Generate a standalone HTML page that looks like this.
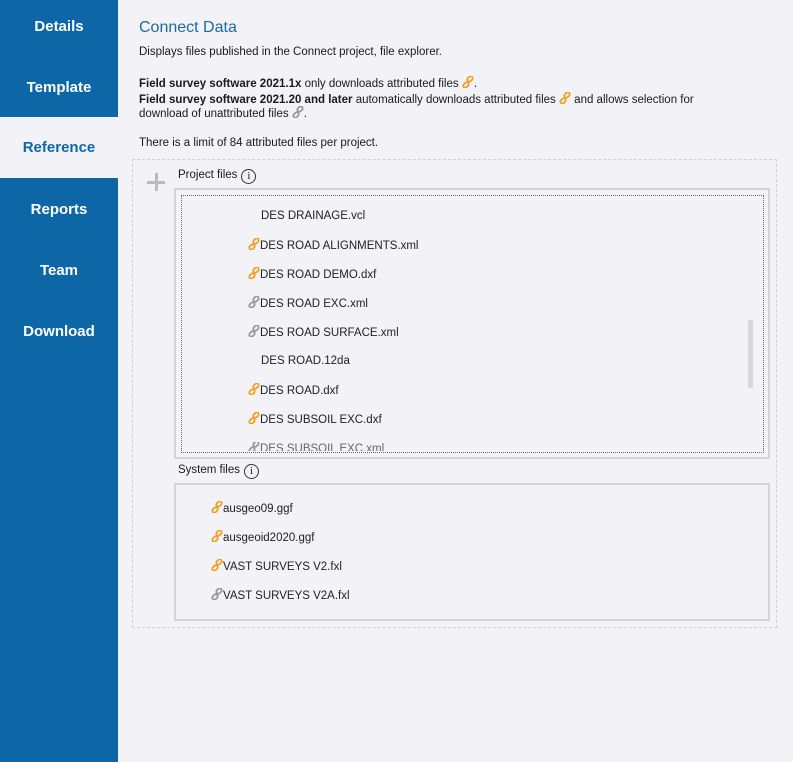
<!DOCTYPE html>
<html><head><meta charset="utf-8"><style>
*{margin:0;padding:0;box-sizing:border-box}
body{width:793px;height:762px;background:#f2f2f7;font-family:"Liberation Sans",sans-serif;color:#222;position:relative;overflow:hidden;font-size:11.5px}
.side{position:absolute;left:0;top:0;width:118px;height:762px;background:#0d67a7}
.tab{position:absolute;left:0;width:118px;height:61px;line-height:54px;text-align:center;color:#fff;font-weight:bold;font-size:15px}
.tab.act{background:#f2f2f7;color:#0d67a7}
.ab{position:absolute;white-space:nowrap}
.t{font-size:11.5px;color:#1a1a1a}
.dash{position:absolute;left:132px;top:159px;width:645px;height:469px;border:1px dashed #d0d0d6}
.box{position:absolute;border:2px solid #d3d3d8}
.dot{position:absolute;left:181px;top:195px;width:583px;height:258px;border:1px dotted #666;overflow:hidden}
.row{position:absolute;font-size:11.5px;color:#222;white-space:nowrap;line-height:14px}
svg.l{width:12px;height:12px;vertical-align:-1px}
.info{display:inline-block;width:15px;height:15px;border:1.3px solid #333;border-radius:50%;text-align:center;font-size:11px;line-height:13px;font-family:"Liberation Serif",serif;vertical-align:-2px;margin-left:4px;position:relative;top:-1px}
</style></head><body>
<div class="side">
<div class="tab" style="top:0">Details</div>
<div class="tab" style="top:61px">Template</div>
<div class="tab act" style="top:117px;height:61px;line-height:61px">Reference</div>
<div class="tab" style="top:183px">Reports</div>
<div class="tab" style="top:244px">Team</div>
<div class="tab" style="top:305px">Download</div>
</div>
<svg width="0" height="0" style="position:absolute"><defs>
<symbol id="lk" viewBox="0 0 12 12"><g fill="none" stroke-width="1.8"><rect x="5" y="1" width="6" height="4" rx="2" transform="rotate(-45 8 3)"/><rect x="1" y="7" width="6" height="4" rx="2" transform="rotate(-45 4 9)"/></g></symbol>
</defs></svg>
<div class="ab" style="left:139px;top:19px;font-size:16px;color:#1c6aa5">Connect Data</div>
<div class="ab t" style="left:139px;top:46px">Displays files published in the Connect project, file explorer.</div>
<div class="ab t" style="left:139px;top:76px"><b>Field survey software 2021.1x</b> only downloads attributed files <svg class="l" stroke="#f0a020"><use href="#lk"/></svg>.</div>
<div class="ab t" style="left:139px;top:92px"><b>Field survey software 2021.20 and later</b> automatically downloads attributed files <svg class="l" stroke="#f0a020"><use href="#lk"/></svg> and allows selection for</div>
<div class="ab t" style="left:139px;top:106px">download of unattributed files <svg class="l" stroke="#999"><use href="#lk"/></svg>.</div>
<div class="ab t" style="left:139px;top:137px">There is a limit of 84 attributed files per project.</div>
<div class="dash"></div>
<div class="ab" style="left:146px;top:172px;width:20px;height:20px"><div style="position:absolute;left:9px;top:1px;width:3px;height:18px;background:#bbb"></div><div style="position:absolute;left:1px;top:9px;width:18px;height:3px;background:#bbb"></div></div>
<div class="ab t" style="left:178px;top:169px">Project files<span class="info">i</span></div>
<div class="box" style="left:174px;top:188px;width:596px;height:271px"></div>
<div class="dot">
<div style="position:absolute;left:566px;top:124px;width:5px;height:68px;background:#d8d8dc"></div>
</div>
<div class="row" style="left:261px;top:209px">DES DRAINAGE.vcl</div>
<div class="row" style="left:248px;top:238px"><svg class="l" stroke="#f0a020"><use href="#lk"/></svg>DES ROAD ALIGNMENTS.xml</div>
<div class="row" style="left:248px;top:267px"><svg class="l" stroke="#f0a020"><use href="#lk"/></svg>DES ROAD DEMO.dxf</div>
<div class="row" style="left:248px;top:296px"><svg class="l" stroke="#999"><use href="#lk"/></svg>DES ROAD EXC.xml</div>
<div class="row" style="left:248px;top:325px"><svg class="l" stroke="#999"><use href="#lk"/></svg>DES ROAD SURFACE.xml</div>
<div class="row" style="left:261px;top:354px">DES ROAD.12da</div>
<div class="row" style="left:248px;top:383px"><svg class="l" stroke="#f0a020"><use href="#lk"/></svg>DES ROAD.dxf</div>
<div class="row" style="left:248px;top:412px"><svg class="l" stroke="#f0a020"><use href="#lk"/></svg>DES SUBSOIL EXC.dxf</div>
<div style="position:absolute;left:182px;top:442px;width:560px;height:9px;overflow:hidden"><div class="row" style="left:66px;top:-1px;color:#666"><svg class="l" stroke="#999"><use href="#lk"/></svg>DES SUBSOIL EXC.xml</div></div>
<div class="ab t" style="left:178px;top:464px">System files<span class="info">i</span></div>
<div class="box" style="left:174px;top:483px;width:596px;height:138px"></div>
<div class="row" style="left:211px;top:501px"><svg class="l" stroke="#f0a020"><use href="#lk"/></svg>ausgeo09.ggf</div>
<div class="row" style="left:211px;top:530px"><svg class="l" stroke="#f0a020"><use href="#lk"/></svg>ausgeoid2020.ggf</div>
<div class="row" style="left:211px;top:559px"><svg class="l" stroke="#f0a020"><use href="#lk"/></svg>VAST SURVEYS V2.fxl</div>
<div class="row" style="left:211px;top:588px"><svg class="l" stroke="#999"><use href="#lk"/></svg>VAST SURVEYS V2A.fxl</div>
</body></html>
